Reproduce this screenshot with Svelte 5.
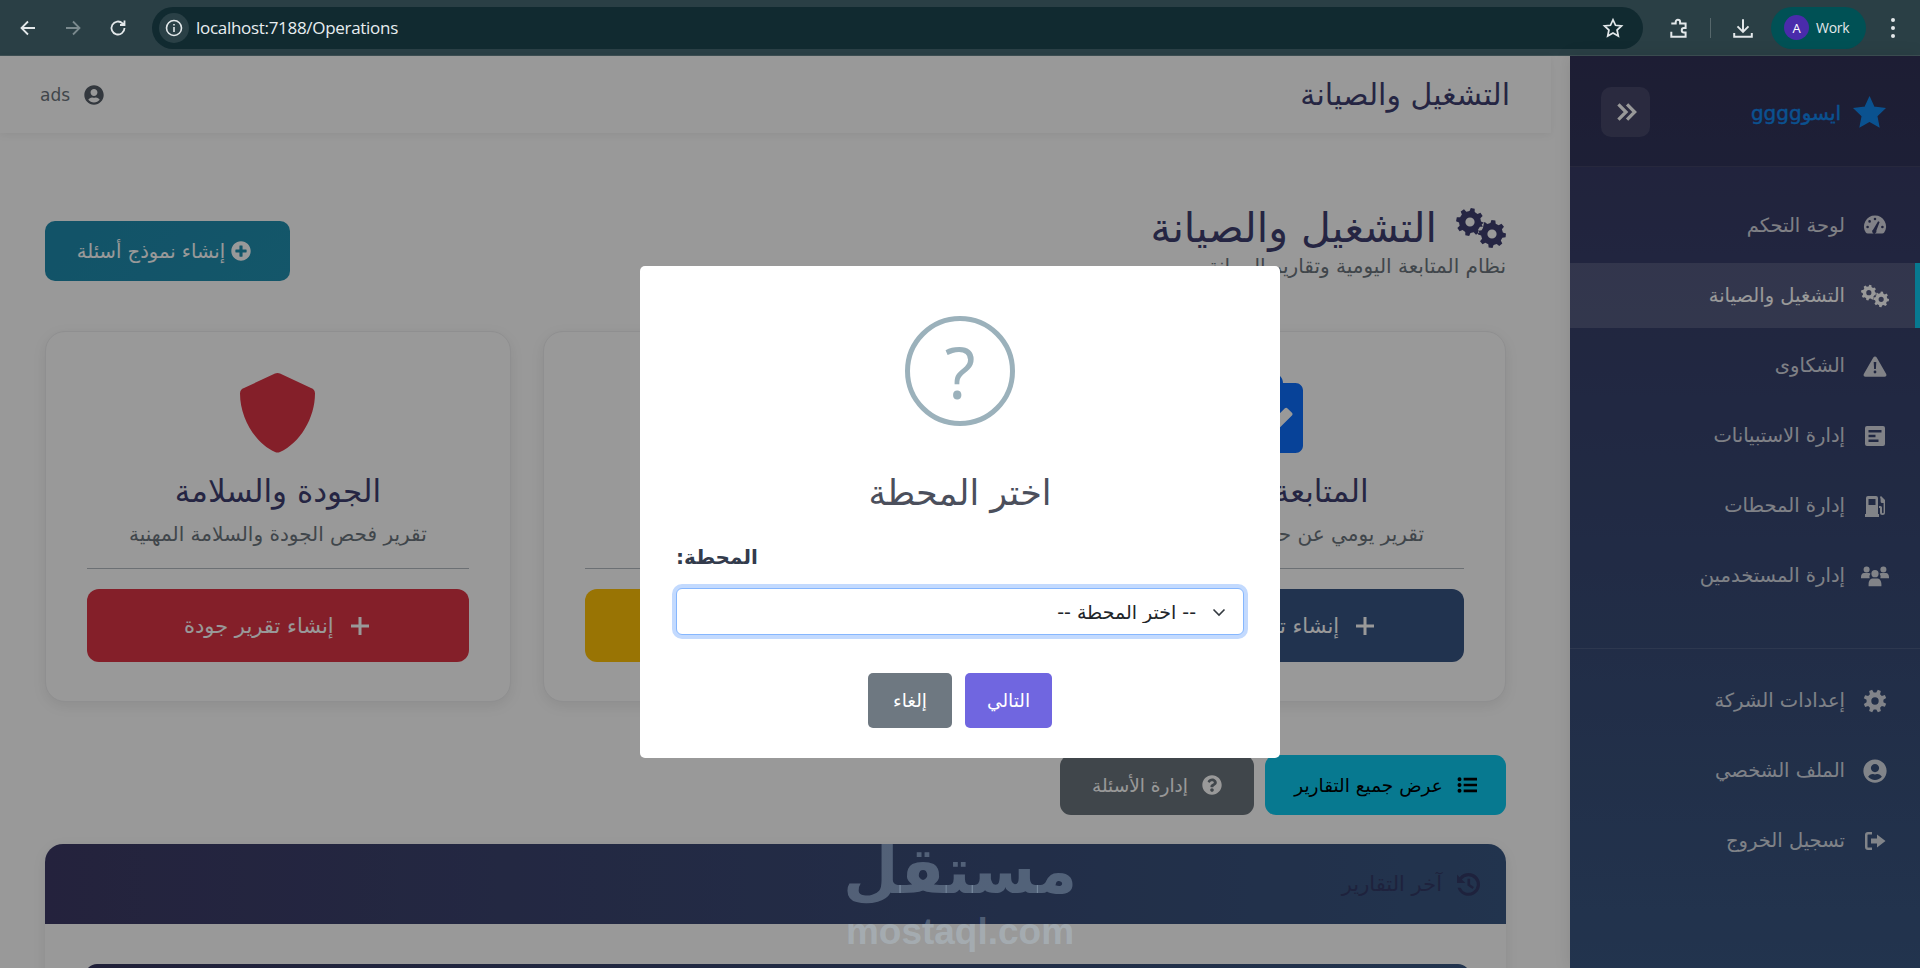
<script lang="ts">
	// small path helpers so the icon table stays readable
	const dot = (x: number, y: number, r: number) =>
		`M${x - r} ${y}a${r} ${r} 0 1 0 ${r * 2} 0a${r} ${r} 0 1 0 ${-r * 2} 0z`;

	const gear = (cx: number, cy: number, R: number, r: number, hole: number, n: number, rot = 0) => {
		const w = Math.PI / n;
		let d = '';
		for (let i = 0; i < n; i++) {
			const a = rot + (i * 2 * Math.PI) / n;
			const pts: [number, number][] = [
				[r, a - w * 0.62],
				[R, a - w * 0.36],
				[R, a + w * 0.36],
				[r, a + w * 0.62]
			];
			for (const [rad, t] of pts) {
				d += `${d ? 'L' : 'M'}${(cx + rad * Math.cos(t)).toFixed(2)} ${(cy + rad * Math.sin(t)).toFixed(2)}`;
			}
		}
		return d + 'z' + dot(cx, cy, hole);
	};

	type Icon = { vb: string; d: string };

	const icons: Record<string, Icon> = {
		gauge: {
			vb: '0 0 24 24',
			d:
				'M12 1.5a11 11 0 0 0-9.2 17c.5.7 1.2 1 2 1h14.4c.8 0 1.5-.3 2-1A11 11 0 0 0 12 1.5z' +
				dot(12, 5, 1.3) + dot(6.6, 7.4, 1.3) + dot(4.6, 13, 1.3) + dot(19.4, 13, 1.3) +
				'M10.2 15.4l4.9-8.2 1.5.8-3.2 8.6a2.2 2.2 0 1 1-3.2-1.2z'
		},
		gears: {
			vb: '0 0 50 40',
			d: gear(14, 14, 14, 11, 4.6, 8, 0.2) + gear(36, 26, 14, 11, 4.6, 8, 0.1)
		},
		warn: {
			vb: '0 0 24 24',
			d:
				'M12 2.5c.7 0 1.3.4 1.7 1l9.5 16.5c.7 1.3-.2 2.8-1.7 2.8H2.5c-1.5 0-2.4-1.5-1.7-2.8L10.3 3.5c.4-.6 1-1 1.7-1z' +
				'M10.7 8h2.6l-.4 7h-1.8z' + dot(12, 18, 1.4)
		},
		poll: {
			vb: '0 0 24 24',
			d:
				'M4 2h16a2 2 0 0 1 2 2v16a2 2 0 0 1-2 2H4a2 2 0 0 1-2-2V4a2 2 0 0 1 2-2z' +
				'M5.5 6h13v2.4h-13zM5.5 10.8h7v2.4h-7zM5.5 15.6h10v2.4h-10z'
		},
		pump: {
			vb: '0 0 24 24',
			d:
				'M3 4a2 2 0 0 1 2-2h8a2 2 0 0 1 2 2v16H3zM5.5 5v6h7V5zM2 20h14v3H2z' +
				'M17 3l1-1 4 4v12.5a2.5 2.5 0 0 1-5 0V14h-1v-2h1.5a1.5 1.5 0 0 1 1.5 1.5v5a.8.8 0 0 0 1.6 0V9h-1.5a1.5 1.5 0 0 1-1.5-1.5V5z'
		},
		users: {
			vb: '0 3 24 18',
			d:
				dot(12, 10, 3.1) + dot(4.8, 6.4, 2.6) + dot(19.2, 6.4, 2.6) +
				'M6.5 19c0-3 1.8-4.8 3.4-4.8h4.2c1.6 0 3.4 1.8 3.4 4.8v1.8H6.5z' +
				'M0 13c0-2 1-3.6 2.6-3.6h4c.6 0 1.1.2 1.5.5A5 5 0 0 0 7.4 14H0z' +
				'M24 13c0-2-1-3.6-2.6-3.6h-4c-.6 0-1.1.2-1.5.5a5 5 0 0 1 .7 4.1H24z'
		},
		cog: { vb: '0 0 24 24', d: gear(12, 12, 11.5, 8.5, 3.7, 8, 0.39) },
		profile: {
			vb: '0 0 496 512',
			d: 'M248 8C111 8 0 119 0 256s111 248 248 248 248-111 248-248S385 8 248 8zm0 96c48.6 0 88 39.4 88 88s-39.4 88-88 88-88-39.4-88-88 39.4-88 88-88zm0 344c-58.7 0-111.3-26.6-146.5-68.2 18.8-35.4 55.6-59.8 98.5-59.8 2.4 0 4.8.4 7.1 1.1 13 4.2 26.6 6.9 40.9 6.9 14.3 0 28-2.7 40.9-6.9 2.3-.7 4.7-1.1 7.1-1.1 42.9 0 79.7 24.4 98.5 59.8C359.3 421.4 306.7 448 248 448z'
		},
		logout: {
			vb: '0 0 24 24',
			d:
				'M9 3H5a3 3 0 0 0-3 3v12a3 3 0 0 0 3 3h4v-2.5H5a.5.5 0 0 1-.5-.5V6a.5.5 0 0 1 .5-.5h4z' +
				'M8 9.5h6V5.5l8.5 6.5-8.5 6.5v-4H8z'
		},
		star: {
			vb: '0 0 24 24',
			d: 'M12 2.5l3 6.6 7.2.9-5.3 5 1.4 7.1L12 18.6l-6.3 3.5 1.4-7.1-5.3-5 7.2-.9z'
		},
		shield: {
			vb: '0 0 75 80',
			d: 'M37.5 0c.9 0 1.8.2 2.5.6L71 15a6 6 0 0 1 4 5.5C75 45 60 70 40 79a6 6 0 0 1-5 0C15 70 0 45 0 20.5A6 6 0 0 1 4 15L35 .6c.7-.4 1.6-.6 2.5-.6z'
		},
		clipboard: {
			vb: '0 0 384 512',
			d: 'M336 64h-80c0-35.3-28.7-64-64-64s-64 28.7-64 64H48C21.5 64 0 85.5 0 112v352c0 26.5 21.5 48 48 48h288c26.5 0 48-21.5 48-48V112c0-26.5-21.5-48-48-48zM192 40c13.3 0 24 10.7 24 24s-10.7 24-24 24-24-10.7-24-24 10.7-24 24-24zm121.2 231.8l-143 141.8c-4.7 4.7-12.3 4.6-17-.1l-82.6-83.3c-4.7-4.7-4.6-12.3.1-17L99.1 285c4.7-4.7 12.3-4.6 17 .1l46 46.4 106-105.2c4.7-4.7 12.3-4.6 17 .1l28.2 28.4c4.7 4.8 4.6 12.3-.1 17z'
		},
		wrench: {
			vb: '0 0 24 24',
			d: 'M22 6.5a6 6 0 0 1-8 5.6L5 21a2.1 2.1 0 0 1-3-3l8.900-9A6 6 0 0 1 17.500 2l-3.500 3.500 1 4 4 1 3-3.500z'
		},
		plus: { vb: '0 0 24 24', d: 'M10.500 3h3v7.500H21v3h-7.500V21h-3v-7.500H3v-3h7.500z' },
		plusCircle: {
			vb: '0 0 512 512',
			d: 'M256 8C119 8 8 119 8 256s111 248 248 248 248-111 248-248S393 8 256 8zm144 276c0 6.600-5.400 12-12 12h-92v92c0 6.600-5.400 12-12 12h-56c-6.600 0-12-5.400-12-12v-92h-92c-6.600 0-12-5.400-12-12v-56c0-6.600 5.400-12 12-12h92v-92c0-6.600 5.400-12 12-12h56c6.600 0 12 5.400 12 12v92h92c6.600 0 12 5.400 12 12v56z'
		},
		question: {
			vb: '0 0 512 512',
			d: 'M504 256c0 136.997-111.043 248-248 248S8 392.997 8 256C8 119.083 119.043 8 256 8s248 111.083 248 248zM262.655 90c-54.497 0-89.255 22.957-116.549 63.758-3.536 5.286-2.353 12.415 2.715 16.258l34.699 26.31c5.205 3.947 12.621 3.008 16.665-2.122 17.864-22.658 30.113-35.797 57.303-35.797 20.429 0 45.698 13.148 45.698 32.958 0 14.976-12.363 22.667-32.534 33.976C247.128 238.528 216 254.941 216 296v4c0 6.627 5.373 12 12 12h56c6.627 0 12-5.373 12-12v-1.333c0-28.462 83.186-29.647 83.186-106.667 0-58.002-60.165-102-116.531-102zM256 338c-25.365 0-46 20.635-46 46 0 25.364 20.635 46 46 46s46-20.636 46-46c0-25.365-20.635-46-46-46z'
		},
		list: {
			vb: '0 0 24 24',
			d:
				dot(3, 5, 2.4) + dot(3, 12, 2.4) + dot(3, 19, 2.4) +
				'M8 3.400h16v3.200H8zM8 10.400h16v3.200H8zM8 17.400h16v3.200H8z'
		},
		history: {
			vb: '0 0 24 24',
			d: 'M1 2.500l2.500 2.500A11 11 0 1 1 1.500 15h3A8 8 0 1 0 5.600 7.100L9 10.500H1zM11 6.500h2.500v5.200l3.800 2.600-1.400 2-4.900-3.400z'
		}
	};

	type Row = { icon: string; label: string; active?: boolean };

	const mainNav: Row[] = [
		{ icon: 'gauge', label: 'لوحة التحكم' },
		{ icon: 'gears', label: 'التشغيل والصيانة', active: true },
		{ icon: 'warn', label: 'الشكاوى' },
		{ icon: 'poll', label: 'إدارة الاستبيانات' },
		{ icon: 'pump', label: 'إدارة المحطات' },
		{ icon: 'users', label: 'إدارة المستخدمين' }
	];

	const bottomNav: Row[] = [
		{ icon: 'cog', label: 'إعدادات الشركة' },
		{ icon: 'profile', label: 'الملف الشخصي' },
		{ icon: 'logout', label: 'تسجيل الخروج' }
	];

	const cards = [
		{
			icon: 'clipboard',
			tone: 'blue',
			title: 'المتابعة اليومية',
			text: 'تقرير يومي عن حالة المحطة والعمل',
			action: 'إنشاء تقرير المتابعة'
		},
		{
			icon: 'wrench',
			tone: 'yellow',
			title: 'الصيانة',
			text: 'تقرير أعمال الصيانة الدورية',
			action: 'إنشاء تقرير صيانة'
		},
		{
			icon: 'shield',
			tone: 'red',
			title: 'الجودة والسلامة',
			text: 'تقرير فحص الجودة والسلامة المهنية',
			action: 'إنشاء تقرير جودة'
		}
	];
</script>

{#snippet glyph(name: string, cls: string)}
	<svg class={cls} viewBox={icons[name].vb} aria-hidden="true">
		<path d={icons[name].d} fill="currentColor" fill-rule="evenodd" />
	</svg>
{/snippet}

<div class="window">
	<div class="chrome">
		<svg class="cbtn" viewBox="0 0 20 20"><path d="M17 10H4M10 3.500 3.500 10l6.500 6.500" /></svg>
		<svg class="cbtn off" viewBox="0 0 20 20"><path d="M3 10h13M10 3.500l6.500 6.500-6.500 6.500" /></svg>
		<svg class="cbtn" viewBox="0 0 20 20"><path d="M16.500 10a6.500 6.500 0 1 1-2-4.700L16.500 7M16.500 2.500V7H12" /></svg>
		<div class="omnibox">
			<span class="chip">
				<svg viewBox="0 0 20 20"><circle cx="10" cy="10" r="7.500" /><path d="M10 9v5M10 6v1.400" /></svg>
			</span>
			<span class="url">localhost:7188/Operations</span>
			<svg class="fav" viewBox="0 0 20 20"><path d="M10 2.500l2.300 5 5.400.6-4 3.700 1.100 5.400L10 14.500l-4.800 2.700 1.100-5.400-4-3.700 5.400-.6z" /></svg>
		</div>
		<svg class="cbtn ext" viewBox="0 0 20 20"><path d="M3 6h4V4.500a2 2 0 0 1 4 0V6h5v4h-1.500a2 2 0 0 0 0 4H16v4H3v-4.500" /></svg>
		<span class="sep"></span>
		<svg class="cbtn dl" viewBox="0 0 20 20"><path d="M10 2v11M5 8.500l5 5 5-5M2 14.500V18h16v-3.500" /></svg>
		<div class="profile-pill"><span class="avatar">A</span><span>Work</span></div>
		<div class="dots"><i></i><i></i><i></i></div>
	</div>

	<div class="layout" dir="rtl">
		<aside class="sidebar">
			<div class="brand">
				<div class="brand-name">
					{@render glyph('star', 'star')}
					<span>ايسوgggg</span>
				</div>
				<button class="collapse" type="button" aria-label="toggle">
					<svg viewBox="0 0 24 24"><path d="M5 5l7 7-7 7M13 5l7 7-7 7" /></svg>
				</button>
			</div>
			<nav class="nav main-nav">
				{#each mainNav as row}
					<a href="#top" class="row" class:active={row.active}>
						<span class="row-icon">{@render glyph(row.icon, 'nav-svg')}</span>
						<span>{row.label}</span>
					</a>
				{/each}
			</nav>
			<nav class="nav bottom-nav">
				{#each bottomNav as row}
					<a href="#top" class="row">
						<span class="row-icon">{@render glyph(row.icon, 'nav-svg')}</span>
						<span>{row.label}</span>
					</a>
				{/each}
			</nav>
		</aside>

		<main class="main">
			<header class="topbar">
				<h2>التشغيل والصيانة</h2>
				<div class="user">
					{@render glyph('profile', 'user-svg')}
					<span>ads</span>
				</div>
			</header>

			<div class="content">
				<div class="page-head">
					<div>
						<h1>{@render glyph('gears', 'h1-svg')}<span>التشغيل والصيانة</span></h1>
						<p>نظام المتابعة اليومية وتقارير الصيانة</p>
					</div>
					<button class="btn-new" type="button">
						{@render glyph('plusCircle', 'new-svg')}
						<span>إنشاء نموذج أسئلة</span>
					</button>
				</div>

				<div class="cards">
					{#each cards as card}
						<section class="card {card.tone}">
							{@render glyph(card.icon, 'card-svg')}
							<h3>{card.title}</h3>
							<p>{card.text}</p>
							<hr />
							<button type="button" class="card-btn">
								{@render glyph('plus', 'plus-svg')}
								<span>{card.action}</span>
							</button>
						</section>
					{/each}
				</div>

				<div class="actions">
					<button type="button" class="act info">{@render glyph('list', 'act-svg')}<span>عرض جميع التقارير</span></button>
					<button type="button" class="act grey">{@render glyph('question', 'act-svg')}<span>إدارة الأسئلة</span></button>
				</div>

				<section class="recent">
					<div class="recent-head">{@render glyph('history', 'hist-svg')}<span>آخر التقارير</span></div>
					<div class="recent-body"><div class="table-head"></div></div>
				</section>
			</div>
		</main>
	</div>

	<div class="overlay">
		<div class="modal">
			<div class="q-icon">?</div>
			<h2 dir="rtl">اختر المحطة</h2>
			<label for="station" dir="rtl">المحطة:</label>
			<div class="select-wrap">
				<select id="station" dir="rtl">
					<option>-- اختر المحطة --</option>
				</select>
				<svg viewBox="0 0 16 16"><path d="M2.500 5.500 8 11l5.500-5.500" /></svg>
			</div>
			<div class="modal-actions">
				<button type="button" class="m-btn cancel">إلغاء</button>
				<button type="button" class="m-btn next">التالي</button>
			</div>
		</div>
		<div class="watermark">
			<span class="wm-ar">مستقل</span>
			<span class="wm-en">mostaql.com</span>
		</div>
	</div>
</div>

<style>
	:global(body) {
		margin: 0;
		background: #fff;
	}

	.window {
		--ar: 'DejaVu Sans', 'Noto Sans', sans-serif;
		position: relative;
		display: flex;
		flex-direction: column;
		width: 1920px;
		height: 968px;
		overflow: hidden;
		font-family: var(--ar);
	}

	button {
		font-family: inherit;
		border: 0;
		cursor: pointer;
	}

	/* browser strip */
	.chrome {
		flex: 0 0 56px;
		display: flex;
		align-items: center;
		box-sizing: border-box;
		padding: 0 0 0 18px;
		background: #2a3f45;
		border-bottom: 1px solid #3d4f53;
		color: #e3e8ea;
	}

	.cbtn {
		width: 20px;
		height: 20px;
		margin-right: 25px;
		fill: none;
		stroke: currentColor;
		stroke-width: 1.8;
		flex: none;
	}

	.cbtn.off {
		color: #7b8a8e;
	}

	.omnibox {
		display: flex;
		align-items: center;
		width: 1491px;
		height: 42px;
		margin-left: -1px;
		box-sizing: border-box;
		padding: 0 8px 0 7px;
		background: #112a30;
		border-radius: 21px;
	}

	.chip {
		display: flex;
		align-items: center;
		justify-content: center;
		width: 30px;
		height: 30px;
		border-radius: 50%;
		background: #2a4046;
	}

	.chip svg {
		width: 20px;
		height: 20px;
		fill: none;
		stroke: #e3e8ea;
		stroke-width: 1.6;
	}

	.url {
		margin-left: 7px;
		font: 17px/20px 'Open Sans', Roboto, sans-serif;
		letter-spacing: -0.3px;
		color: #e8eef0;
	}

	.fav {
		width: 22px;
		height: 22px;
		margin-left: auto;
		margin-right: 11px;
		fill: none;
		stroke: #e3e8ea;
		stroke-width: 1.6;
	}

	.ext {
		margin: 0 0 0 25px;
		width: 22px;
		height: 22px;
	}

	.sep {
		width: 1px;
		height: 20px;
		margin: 0 0 0 20px;
		background: #56676b;
	}

	.dl {
		margin: 0 0 0 21px;
		width: 22px;
		height: 22px;
	}

	.profile-pill {
		display: flex;
		align-items: center;
		gap: 7px;
		width: 95px;
		height: 42px;
		margin-left: 17px;
		box-sizing: border-box;
		padding-left: 13px;
		border-radius: 21px;
		background: #005155;
		font: 14px 'Open Sans', sans-serif;
		letter-spacing: -0.3px;
	}

	.avatar {
		display: flex;
		align-items: center;
		justify-content: center;
		width: 25px;
		height: 25px;
		border-radius: 50%;
		background: #4a2bab;
		color: #fff;
		font-size: 13px;
	}

	.dots {
		display: flex;
		flex-direction: column;
		gap: 4px;
		margin-left: 25px;
	}

	.dots i {
		width: 4px;
		height: 4px;
		border-radius: 50%;
		background: #e3e8ea;
	}

	/* page under the dialog */
	.layout {
		flex: 1;
		display: flex;
		min-height: 0;
	}

	.sidebar {
		flex: 0 0 350px;
		display: flex;
		flex-direction: column;
		background: linear-gradient(180deg, #373762, #395782);
		color: #fff;
		box-shadow: 0 0 16px rgba(0, 0, 0, 0.1);
		z-index: 1;
	}

	.brand {
		flex: 0 0 111px;
		box-sizing: border-box;
		display: flex;
		align-items: center;
		justify-content: space-between;
		padding: 0 33px 0 31px;
		background: rgba(0, 0, 0, 0.1);
		border-bottom: 1px solid rgba(255, 255, 255, 0.08);
	}

	.brand-name {
		display: flex;
		align-items: center;
		gap: 11px;
		color: #1289f0;
		font-size: 20px;
		font-weight: 400;
		-webkit-text-stroke: 0.4px currentColor;
	}

	.brand-name span {
		transform: translateY(2px);
	}

	:global(.star) {
		width: 35px;
		height: 35px;
		stroke: currentColor;
	}

	.collapse {
		display: flex;
		align-items: center;
		justify-content: center;
		width: 49px;
		height: 50px;
		border-radius: 10px;
		background: rgba(255, 255, 255, 0.1);
		transform: translateY(1px);
	}

	.collapse svg {
		width: 26px;
		height: 26px;
		fill: none;
		stroke: #fff;
		stroke-width: 3;
	}

	.nav {
		display: flex;
		flex-direction: column;
		gap: 5px;
	}

	.main-nav {
		padding: 26px 0 40px;
		border-bottom: 1px solid rgba(255, 255, 255, 0.1);
	}

	.bottom-nav {
		padding-top: 19px;
	}

	.row {
		display: flex;
		align-items: center;
		height: 65px;
		box-sizing: border-box;
		padding: 0 30px 0 0;
		color: rgba(255, 255, 255, 0.8);
		font-size: 19.5px;
		text-decoration: none;
		border-right: 5px solid transparent;
	}

	.row.active {
		background: rgba(255, 255, 255, 0.15);
		border-right-color: #0dcaf0;
		color: #fff;
	}

	.row-icon {
		flex: 0 0 30px;
		display: flex;
		justify-content: center;
		margin-left: 15px;
		margin-right: -5px;
	}

	:global(.nav-svg) {
		width: 28px;
		height: 24px;
	}

	.main {
		flex: 1;
		min-width: 0;
		background: #fff;
	}

	.topbar {
		display: flex;
		align-items: center;
		justify-content: space-between;
		height: 77px;
		margin-right: 19px;
		box-sizing: border-box;
		padding: 0 41px 0 40px;
		background: #fff;
		box-shadow: 0 2px 8px rgba(0, 0, 0, 0.06);
	}

	.topbar h2 {
		margin: 0;
		font-size: 30px;
		font-weight: 400;
		line-height: 40px;
		color: #3f3f70;
	}

	.user {
		display: flex;
		align-items: center;
		gap: 14px;
		font-size: 17px;
		color: #6c757d;
	}

	:global(.user-svg) {
		width: 20px;
		height: 20px;
		color: #565e68;
	}

	.content {
		padding: 71px 64px 0 45px;
	}

	.page-head {
		display: flex;
		justify-content: space-between;
		align-items: flex-start;
		height: 127px;
	}

	h1 {
		display: flex;
		align-items: center;
		gap: 19px;
		margin: 0;
		height: 48px;
		font-size: 41px;
		font-weight: 400;
		color: #3f3f70;
	}

	:global(.h1-svg) {
		width: 50px;
		height: 40px;
	}

	.page-head p {
		margin: 2px 0 0;
		font-size: 20px;
		line-height: 24px;
		color: #6c757d;
	}

	.btn-new {
		display: flex;
		align-items: center;
		gap: 6px;
		height: 60px;
		width: 245px;
		margin-top: 17px;
		justify-content: center;
		padding: 0 7px 0 0;
		border-radius: 10px;
		background: linear-gradient(135deg, #1e8aad, #2290b1);
		color: #fff;
		font-size: 19.5px;
	}

	:global(.new-svg) {
		width: 20px;
		height: 20px;
	}

	.cards {
		display: grid;
		grid-template-columns: repeat(3, 1fr);
		gap: 32px;
	}

	.card {
		display: flex;
		flex-direction: column;
		align-items: center;
		height: 371px;
		box-sizing: border-box;
		padding: 41px 41px 0;
		background: #fff;
		border: 1px solid #eeeef0;
		border-radius: 20px;
		box-shadow: 0 4px 14px rgba(0, 0, 0, 0.08);
	}

	:global(.card-svg) {
		height: 80px;
		width: 75px;
	}

	.card.blue :global(.card-svg) {
		color: #0d6efd;
		width: 60px;
	}

	.card.yellow :global(.card-svg) {
		color: #ffc107;
	}

	.card.red :global(.card-svg) {
		color: #dc3545;
	}

	.card h3 {
		margin: 19px 0 0;
		font-size: 31px;
		line-height: 38px;
		font-weight: 400;
		color: #3f3f70;
	}

	.card p {
		margin: 11px 0 0;
		font-size: 20px;
		line-height: 26px;
		color: #6c757d;
	}

	.card hr {
		width: 100%;
		margin: 21px 0 20px;
		border: 0;
		border-top: 1px solid #b4bbc2;
	}

	.card-btn {
		display: flex;
		align-items: center;
		justify-content: center;
		gap: 14px;
		width: 100%;
		height: 73px;
		flex: none;
		border-radius: 12px;
		color: #fff;
		font-size: 21px;
	}

	.blue .card-btn {
		background: #375584;
	}

	.yellow .card-btn {
		background: #ffc107;
	}

	.red .card-btn {
		background: #dc3545;
	}

	:global(.plus-svg) {
		width: 24px;
		height: 24px;
	}

	.actions {
		display: flex;
		gap: 11px;
		margin-top: 53px;
	}

	.act {
		display: flex;
		align-items: center;
		justify-content: center;
		gap: 14px;
		height: 60px;
		border-radius: 11px;
		font-size: 18.5px;
	}

	.act.info {
		width: 241px;
		background: #0dcaf0;
		color: #000;
	}

	.act.grey {
		width: 194px;
		background: #6c757d;
		color: #fff;
	}

	:global(.act-svg) {
		width: 20px;
		height: 20px;
	}

	.recent {
		margin-top: 29px;
		border-radius: 18px 18px 0 0;
		background: #fff;
		box-shadow: 0 4px 14px rgba(0, 0, 0, 0.08);
	}

	.recent-head {
		display: flex;
		align-items: center;
		gap: 14px;
		height: 80px;
		padding-right: 25px;
		border-radius: 18px 18px 0 0;
		background: linear-gradient(90deg, #3c3a66, #395782);
		color: #333a66;
		font-size: 21px;
	}

	:global(.hist-svg) {
		width: 25px;
		height: 25px;
	}

	.recent-body {
		padding: 40px 36px 0 40px;
		background: #fff;
	}

	.table-head {
		height: 60px;
		border-radius: 12px 12px 0 0;
		background: linear-gradient(90deg, #36365f, #395782);
	}

	/* dialog */
	.overlay {
		position: absolute;
		inset: 56px 0 0;
		display: flex;
		align-items: center;
		justify-content: center;
		background: rgba(0, 0, 0, 0.4);
		z-index: 2;
	}

	.modal {
		display: flex;
		flex-direction: column;
		align-items: center;
		width: 640px;
		height: 492px;
		box-sizing: border-box;
		padding: 50px 36px 0;
		background: #fff;
		border-radius: 5px;
	}

	.q-icon {
		display: flex;
		align-items: center;
		justify-content: center;
		width: 110px;
		height: 110px;
		flex: none;
		box-sizing: border-box;
		border: 5px solid #9bb1bb;
		border-radius: 50%;
		color: #9bb1bb;
		font: 500 72px/1 'Open Sans', sans-serif;
	}

	.modal h2 {
		margin: 44px 0 0;
		height: 46px;
		font-size: 35px;
		line-height: 46px;
		font-weight: 400;
		color: #4b4f5c;
	}

	.modal label {
		align-self: flex-start;
		margin-top: 28px;
		font-size: 20px;
		line-height: 26px;
		font-weight: 700;
		color: #333b4c;
	}

	.select-wrap {
		position: relative;
		width: 568px;
		height: 47px;
		margin-top: 18px;
		flex: none;
	}

	select {
		appearance: none;
		width: 100%;
		height: 100%;
		box-sizing: border-box;
		padding: 0 47px 0 12px;
		background: #fff;
		border: 1px solid #86b7fe;
		border-radius: 6px;
		outline: 0;
		box-shadow: 0 0 0 4px #c3dafe;
		font: 19px var(--ar);
		color: #212529;
	}

	.select-wrap svg {
		position: absolute;
		top: 16px;
		right: 17px;
		width: 16px;
		height: 16px;
		fill: none;
		stroke: #343a40;
		stroke-width: 1.6;
		pointer-events: none;
	}

	.modal-actions {
		display: flex;
		gap: 13px;
		margin-top: 38px;
	}

	.m-btn {
		height: 55px;
		border-radius: 5px;
		color: #fff;
		font-size: 18.5px;
	}

	.cancel {
		width: 84px;
		background: #6e7881;
	}

	.next {
		width: 87px;
		background: #7066e0;
	}

	.watermark {
		position: absolute;
		top: 776px;
		left: 845px;
		width: 230px;
		display: flex;
		flex-direction: column;
		align-items: center;
		color: rgba(195, 220, 235, 0.3);
		pointer-events: none;
	}

	.wm-ar {
		font-size: 64px;
		font-weight: 700;
		line-height: 78px;
	}

	.wm-en {
		font: 700 37px/40px 'Liberation Sans', sans-serif;
		margin-top: 2px;
	}
</style>
